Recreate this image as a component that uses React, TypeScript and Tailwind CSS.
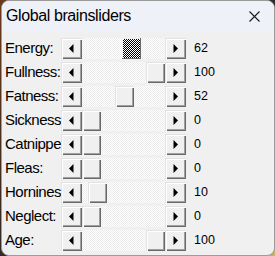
const rows: { label: string; value: number; focused?: boolean }[] = [
  { label: "Energy:", value: 62, focused: true },
  { label: "Fullness:", value: 100 },
  { label: "Fatness:", value: 52 },
  { label: "Sickness", value: 0 },
  { label: "Catnippe", value: 0 },
  { label: "Fleas:", value: 0 },
  { label: "Hornines", value: 10 },
  { label: "Neglect:", value: 0 },
  { label: "Age:", value: 100 },
];

const bevel =
  "bg-[#f0f0f0] shadow-[inset_1px_1px_#e3e3e3,inset_2px_2px_#ffffff,inset_-1px_-1px_#696969,inset_-2px_-2px_#a0a0a0]";

function Arrow({ dir }: { dir: "left" | "right" }) {
  return (
    <div className={`flex h-full w-[21px] shrink-0 items-center justify-center ${bevel}`}>
      <svg width="5" height="9" viewBox="0 0 5 9">
        {dir === "left" ? (
          <polygon points="4.5,0 4.5,9 0,4.5" fill="#000" />
        ) : (
          <polygon points="0.5,0 0.5,9 5,4.5" fill="#000" />
        )}
      </svg>
    </div>
  );
}

function Slider({ value, focused }: { value: number; focused?: boolean }) {
  const left = Math.round((value / 100) * 64);
  return (
    <div className="flex h-[21px] w-[125px] shrink-0">
      <Arrow dir="left" />
      <div className="relative flex-1 bg-[repeating-conic-gradient(#ffffff_0_25%,#ebebeb_0_50%)] bg-[length:2px_2px]">
        {focused ? (
          <div
            style={{ left }}
            className="absolute top-0 h-full w-[19px] p-[1px] bg-[#f0f0f0] shadow-[inset_-1px_-1px_#696969]"
          >
            <div className="h-full w-full bg-[repeating-conic-gradient(#000000_0_25%,#ffffff_0_50%)] bg-[length:2px_2px]" />
          </div>
        ) : (
          <div style={{ left }} className={`absolute top-0 h-full w-[19px] ${bevel}`} />
        )}
      </div>
      <Arrow dir="right" />
    </div>
  );
}

export default function App() {
  return (
    <div className="h-[256px] w-[275px] bg-[linear-gradient(135deg,#6b3a1c_0%,#3a2a20_40%,#1c2a48_70%,#c9b560_100%)]">
      <div className="ml-[1px] h-[256px] w-[274px] overflow-hidden rounded-lg border border-[#9c9c9c] bg-[#f0f0f0] font-['Liberation_Sans',Arial,sans-serif] text-black">
        <div className="flex h-[30px] items-center justify-between bg-[#eff1f8] pl-[4px] pr-[14px]">
          <span className="text-[16px] tracking-[-0.4px]">Global brainsliders</span>
          <svg width="11" height="11" viewBox="0 0 11 11">
            <path d="M0.5 0.5 L10.5 10.5 M10.5 0.5 L0.5 10.5" stroke="#1a1a1a" strokeWidth="1.1" />
          </svg>
        </div>
        <div className="flex flex-col gap-[3px] pl-[3px] pt-[7px]">
          {rows.map((r) => (
            <div key={r.label} className="flex h-[21px] items-center">
              <div className="w-[56px] shrink-0 overflow-hidden whitespace-nowrap text-[15px] tracking-[-0.5px]">
                {r.label}
              </div>
              <Slider value={r.value} focused={r.focused} />
              <span className="ml-[8px] text-[12.5px]">{r.value}</span>
            </div>
          ))}
        </div>
      </div>
    </div>
  );
}
